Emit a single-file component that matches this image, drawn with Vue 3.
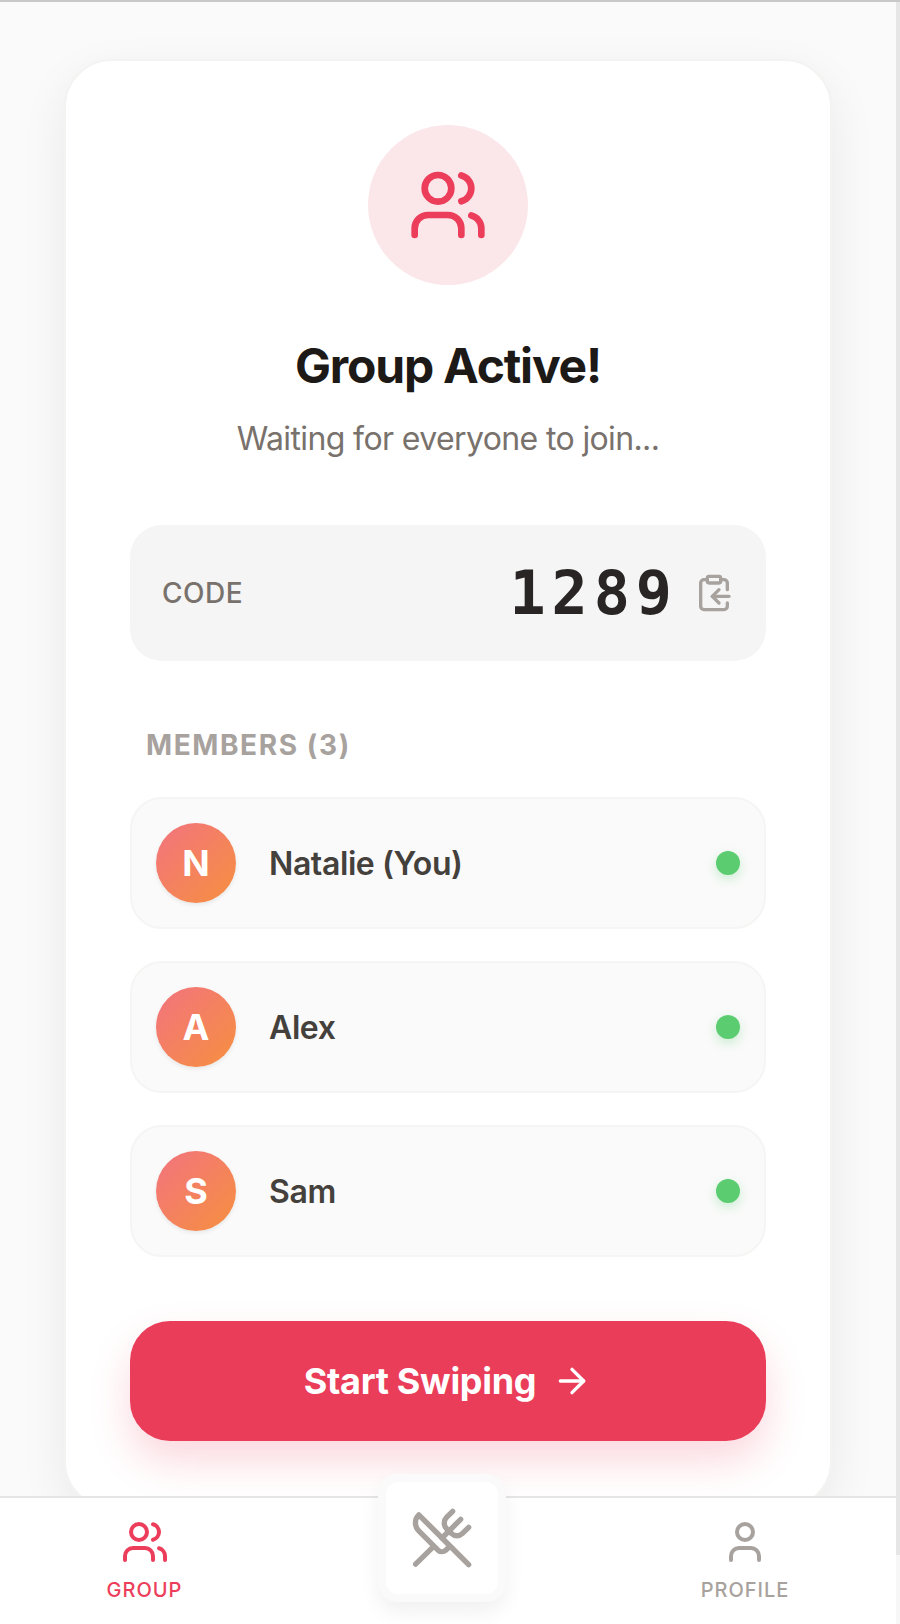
<script setup>
const members = [
  { name: 'Natalie (You)', initial: 'N' },
  { name: 'Alex', initial: 'A' },
  { name: 'Sam', initial: 'S' },
]
</script>

<template>
  <div class="screen">
    <div class="page">
      <main class="content">
        <section class="card">
          <div class="hero-icon">
            <svg class="icon-80" viewBox="0 0 24 24" fill="none" stroke="currentColor" stroke-width="2" stroke-linecap="round" stroke-linejoin="round">
              <path d="M16 21v-2a4 4 0 0 0-4-4H6a4 4 0 0 0-4 4v2" />
              <path d="M16 3.128a4 4 0 0 1 0 7.744" />
              <path d="M22 21v-2a4 4 0 0 0-3-3.87" />
              <circle cx="9" cy="7" r="4" />
            </svg>
          </div>
          <h1 class="title">Group Active!</h1>
          <p class="subtitle">Waiting for everyone to join...</p>

          <div class="code-box">
            <span class="code-label">CODE</span>
            <div class="code-right">
              <span class="code-value">1289</span>
              <svg class="icon-40" viewBox="0 0 24 24" fill="none" stroke="currentColor" stroke-width="2" stroke-linecap="round" stroke-linejoin="round">
                <rect x="8" y="2" width="8" height="4" rx="1" ry="1" />
                <path d="M8 4H6a2 2 0 0 0-2 2v14a2 2 0 0 0 2 2h12a2 2 0 0 0 2-2v-2" />
                <path d="M16 4h2a2 2 0 0 1 2 2v4" />
                <path d="M21 14H11" />
                <path d="m15 10-4 4 4 4" />
              </svg>
            </div>
          </div>

          <h2 class="members-title">MEMBERS (3)</h2>
          <ul class="members">
            <li v-for="m in members" :key="m.name" class="member">
              <span class="avatar">{{ m.initial }}</span>
              <span class="member-name">{{ m.name }}</span>
              <span class="status-dot"></span>
            </li>
          </ul>

          <button class="start-btn">
            Start Swiping
            <svg class="icon-arrow" viewBox="0 0 24 24" fill="none" stroke="currentColor" stroke-width="2" stroke-linecap="round" stroke-linejoin="round">
              <path d="M5 12h14" />
              <path d="m12 5 7 7-7 7" />
            </svg>
          </button>
        </section>
      </main>

      <nav class="tabbar">
        <div class="tab tab-active">
          <svg class="icon-48" viewBox="0 0 24 24" fill="none" stroke="currentColor" stroke-width="2" stroke-linecap="round" stroke-linejoin="round">
            <path d="M16 21v-2a4 4 0 0 0-4-4H6a4 4 0 0 0-4 4v2" />
            <path d="M16 3.128a4 4 0 0 1 0 7.744" />
            <path d="M22 21v-2a4 4 0 0 0-3-3.87" />
            <circle cx="9" cy="7" r="4" />
          </svg>
          <span>GROUP</span>
        </div>
        <div class="center-btn">
          <svg class="icon-64" viewBox="0 0 24 24" fill="none" stroke="currentColor" stroke-width="2" stroke-linecap="round" stroke-linejoin="round">
            <path d="m16 2-2.3 2.3a3 3 0 0 0 0 4.2l1.8 1.8a3 3 0 0 0 4.2 0L22 8" />
            <path d="M15 15 3.3 3.3a4.2 4.2 0 0 0 0 6l7.3 7.3c.7.7 2 .7 2.8 0L15 15Zm0 0 7 7" />
            <path d="m2.1 21.8 6.4-6.3" />
            <path d="m19 5-7 7" />
          </svg>
        </div>
        <div class="tab">
          <svg class="icon-48" viewBox="0 0 24 24" fill="none" stroke="currentColor" stroke-width="2" stroke-linecap="round" stroke-linejoin="round">
            <path d="M19 21v-2a4 4 0 0 0-4-4H9a4 4 0 0 0-4 4v2" />
            <circle cx="12" cy="7" r="4" />
          </svg>
          <span>PROFILE</span>
        </div>
      </nav>
    </div>

    <div class="scrollbar">
      <div class="scrollbar-thumb"></div>
    </div>
  </div>
</template>

<style>
html,
body {
  margin: 0;
  background: #fafafa;
}
</style>

<style scoped>
.screen {
  width: 900px;
  height: 1624px;
  display: flex;
  overflow: hidden;
  background: #fafafa;
  font-family: Inter, "Liberation Sans", sans-serif;
  border-top: 2px solid #c8c8c8;
  box-sizing: border-box;
}

.page {
  flex: 1;
  min-width: 0;
  display: flex;
  flex-direction: column;
}

.scrollbar {
  flex: none;
  width: 4px;
  background: #f7f7f7;
}

.scrollbar-thumb {
  height: 1553px;
  background: #e6e6e6;
}

.content {
  flex: 1;
  min-height: 0;
  overflow: hidden;
  padding: 57px 0 0 64px;
}

.card {
  width: 768px;
  box-sizing: border-box;
  padding: 64px 64px 66px;
  background: #fff;
  border: 2px solid #f3f3f2;
  border-radius: 48px;
  box-shadow: 0 16px 48px rgba(0, 0, 0, 0.07);
  display: flex;
  flex-direction: column;
  align-items: center;
}

.hero-icon {
  width: 160px;
  height: 160px;
  border-radius: 50%;
  background: #fbe6e9;
  color: #ec3e5b;
  display: flex;
  align-items: center;
  justify-content: center;
}

.icon-80 { width: 80px; height: 80px; }
.icon-64 { width: 64px; height: 64px; }
.icon-48 { width: 48px; height: 48px; }
.icon-40 { width: 40px; height: 40px; color: #a8a29e; }
.icon-arrow { width: 40px; height: 40px; }

.title {
  margin: 49px 0 0;
  font-size: 48px;
  line-height: 64px;
  font-weight: 700;
  letter-spacing: -1.2px;
  color: #1c1917;
}

.subtitle {
  margin: 17px 0 0;
  font-size: 32px;
  line-height: 48px;
  letter-spacing: -0.62px;
  color: #78716c;
}

.code-box {
  width: 100%;
  height: 136px;
  margin-top: 62px;
  padding: 0 32px;
  box-sizing: border-box;
  background: #f5f5f5;
  border-radius: 32px;
  display: flex;
  align-items: center;
  justify-content: space-between;
}

.code-label {
  font-size: 28px;
  font-weight: 500;
  letter-spacing: 0.5px;
  color: #78716c;
}

.code-right {
  display: flex;
  align-items: center;
  gap: 16px;
}

.code-value {
  font-family: "DejaVu Sans Mono", monospace;
  font-size: 60px;
  font-weight: 700;
  letter-spacing: 6px;
  color: #292524;
}

.members-title {
  align-self: flex-start;
  margin: 64px 0 0 16px;
  font-size: 28px;
  line-height: 40px;
  font-weight: 700;
  letter-spacing: 1.6px;
  color: #a8a29e;
}

.members {
  list-style: none;
  width: 100%;
  margin: 32px 0 0;
  padding: 0;
  display: flex;
  flex-direction: column;
  gap: 32px;
}

.member {
  height: 132px;
  box-sizing: border-box;
  padding: 0 24px;
  background: #fafafa;
  border: 2px solid #f5f5f4;
  border-radius: 32px;
  display: flex;
  align-items: center;
}

.avatar {
  width: 80px;
  height: 80px;
  border-radius: 50%;
  background: linear-gradient(135deg, #f2737f, #f6903f);
  box-shadow: 0 2px 4px rgba(0, 0, 0, 0.08);
  color: #fff;
  font-size: 36px;
  font-weight: 700;
  display: flex;
  align-items: center;
  justify-content: center;
}

.member-name {
  flex: 1;
  margin-left: 33px;
  font-size: 32px;
  font-weight: 600;
  letter-spacing: -0.4px;
  color: #44403c;
}

.status-dot {
  width: 24px;
  height: 24px;
  border-radius: 50%;
  background: #5bcc70;
  box-shadow: 0 4px 12px rgba(91, 204, 112, 0.3);
}

.start-btn {
  width: 100%;
  height: 120px;
  margin-top: 64px;
  border: none;
  border-radius: 40px;
  background: #ea3d5a;
  color: #fff;
  font-family: inherit;
  font-size: 36px;
  font-weight: 700;
  letter-spacing: -0.3px;
  display: flex;
  align-items: center;
  justify-content: center;
  gap: 16px;
  box-shadow: 0 20px 40px rgba(236, 62, 91, 0.2);
}

.tabbar {
  flex: none;
  height: 128px;
  box-sizing: border-box;
  background: #fff;
  border-top: 2px solid #e5e5e5;
  display: flex;
  justify-content: space-around;
  position: relative;
}

.tab {
  display: flex;
  flex-direction: column;
  align-items: center;
  padding: 20px 18px 0;
  gap: 12px;
  color: #a8a29e;
  font-size: 20px;
  line-height: 24px;
  font-weight: 500;
  letter-spacing: 1px;
}

.tab-active {
  color: #ec3e5b;
}

.center-btn {
  width: 128px;
  height: 128px;
  box-sizing: border-box;
  margin-top: -24px;
  background: #fff;
  border: 8px solid #fafafa;
  border-radius: 20px;
  box-shadow: 0 10px 20px rgba(0, 0, 0, 0.06);
  color: #a8a29e;
  display: flex;
  align-items: center;
  justify-content: center;
}
</style>
